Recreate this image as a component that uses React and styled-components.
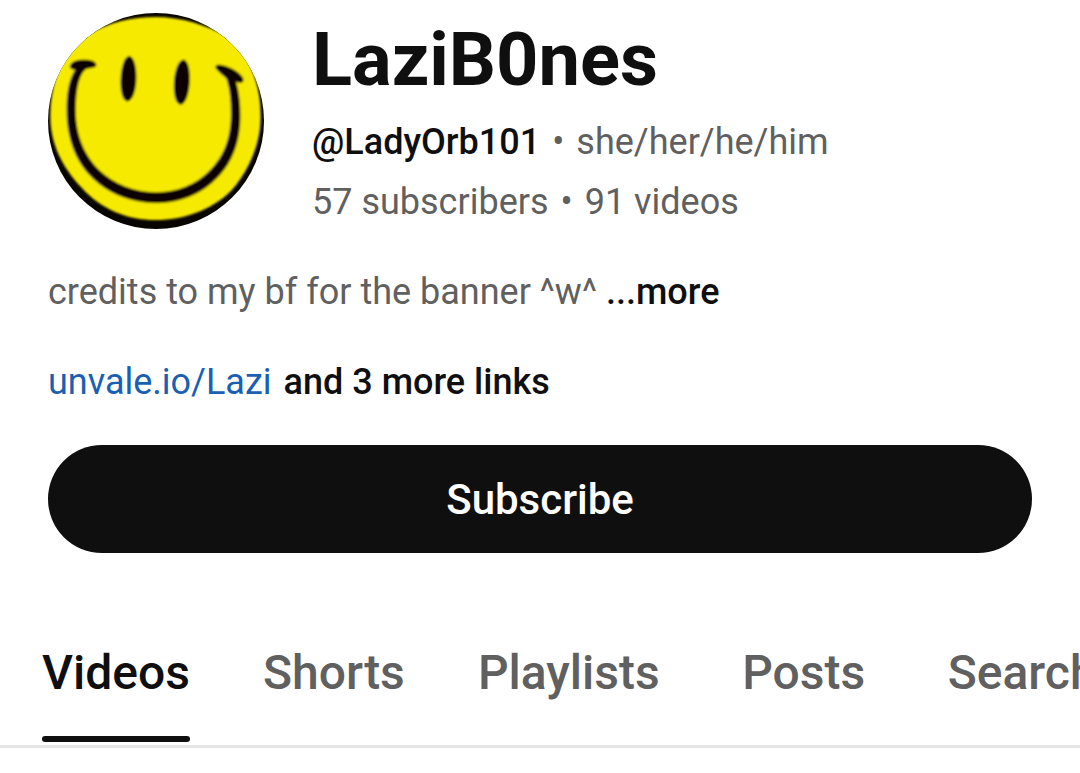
import React from "react";
import styled, { createGlobalStyle } from "styled-components";

const Global = createGlobalStyle`
  * { box-sizing: border-box; }
  body { margin: 0; background: #fff; color: #0f0f0f; font-family: Roboto, sans-serif; overflow-x: hidden; }
  h1, p { margin: 0; }
  button { font-family: inherit; border: 0; padding: 0; background: none; color: inherit; cursor: pointer; }
`;
const Page = styled.main`
  overflow: hidden;
`;
const Header = styled.header`
  display: flex;
  gap: 48px;
  padding: 13px 48px 0;
`;
const Avatar = styled.svg`
  flex: none;
  width: 216px;
  height: 216px;
  border-radius: 50%;
`;
const Info = styled.div`
  min-width: 0;
  white-space: nowrap;
`;
const Name = styled.h1`
  margin-top: 5px;
  font-size: 74px;
  line-height: 84px;
  font-weight: 700;
`;
const Meta = styled.p`
  display: flex;
  gap: 12px;
  margin-top: ${(p) => p.$top}px;
  font-size: 36px;
  line-height: 48px;
  color: #606060;
`;
const Handle = styled.span`
  font-weight: 500;
  color: #0f0f0f;
`;
const About = styled.section`
  display: flex;
  flex-direction: column;
  gap: 42px;
  padding: 39px 48px;
`;
const Line = styled.p`
  display: flex;
  gap: ${(p) => p.$gap}px;
  font-size: 36px;
  line-height: 48px;
  color: #606060;
`;
const TextButton = styled.button`
  font-size: 36px;
  line-height: 48px;
  font-weight: 500;
  color: #0f0f0f;
`;
const SiteLink = styled.a`
  color: #1a5fb4;
  text-decoration: none;
`;
const Actions = styled.div`
  padding: 0 48px;
`;
const Subscribe = styled.button`
  width: 100%;
  height: 108px;
  border-radius: 54px;
  && { background: #0f0f0f; color: #fff; }
  font-size: 42px;
  font-weight: 500;
`;
const Tabs = styled.nav`
  display: flex;
  gap: 72px;
  margin-top: 60px;
  padding-left: 42px;
  border-bottom: 3px solid #e5e5e5;
  overflow-x: auto;
  scrollbar-width: none;
`;
const Tab = styled.button`
  flex: none;
  min-width: 144px;
  && { color: ${(p) => (p.$active ? "#0f0f0f" : "#606060")}; }
  font-size: 48px;
  line-height: 120px;
  font-weight: 500;
  && { padding-bottom: 3px; }
  &::after {
    content: "";
    display: block;
    height: 6px;
    margin-top: 3px;
    border-radius: 3px;
    background: ${(p) => (p.$active ? "#0f0f0f" : "transparent")};
  }
`;

function Smiley() {
  return (
    <Avatar viewBox="24 39 648 648" role="img" aria-label="Smiley face">
      <defs>
        <filter id="soft" x="-5%" y="-5%" width="110%" height="110%">
          <feGaussianBlur stdDeviation="3" />
        </filter>
      </defs>
      <rect x="24" y="39" width="648" height="648" fill="#080400" />
      <g filter="url(#soft)">
        <path
          d="M348 51 C420 51 500 74 560 110 C628 158 662 250 662 350 C662 432 627 512 573 573 C512 632 430 660 348 660 C260 660 183 627 125 563 C67 502 31 430 31 350 C31 290 42 240 64 190 L40 180 L110 90 L150 101 C210 66 275 51 348 51 Z"
          fill="#f6ea00"
        />
        <g fill="#080400" stroke="#080400" strokeWidth="2">
          <path d="M268 169 C280 169 289 200 288 236 C287 274 276 303 262 303 C249 303 241 272 243 236 C245 198 255 169 268 169 Z" />
          <path d="M430 180 C443 180 450 210 448 246 C446 284 435 313 422 313 C408 313 401 283 403 246 C405 210 417 180 430 180 Z" />
          <path d="M91 198 C92 187 108 180 132 180 C153 180 168 185 168 195 C168 203 153 202 138 206 C114 224 106 275 106 335 C107 400 127 459 174 508 C222 555 284 578 350 578 C412 577 466 556 509 513 C556 465 574 410 574 340 C574 302 571 268 561 237 C550 225 526 209 527 199 C530 191 554 197 574 206 C597 217 612 233 609 243 C606 251 594 247 587 244 C597 278 600 314 600 348 C600 416 581 482 532 532 C484 583 418 608 350 608 C272 608 202 579 153 529 C100 474 82 403 81 335 C80 282 88 236 108 207 C98 209 90 208 91 198 Z" />
        </g>
      </g>
    </Avatar>
  );
}

export default function App() {
  return (
    <Page>
      <Global />
      <Header>
        <Smiley />
        <Info>
          <Name>LaziB0nes</Name>
          <Meta $top={16}><Handle>@LadyOrb101</Handle><span>•</span><span>she/her/he/him</span></Meta>
          <Meta $top={12}><span>57 subscribers</span><span>•</span><span>91 videos</span></Meta>
        </Info>
      </Header>
      <About>
        <Line $gap={9}><span>credits to my bf for the banner ^w^</span><TextButton>...more</TextButton></Line>
        <Line $gap={12}><SiteLink href="#links">unvale.io/Lazi</SiteLink><TextButton>and 3 more links</TextButton></Line>
      </About>
      <Actions><Subscribe>Subscribe</Subscribe></Actions>
      <Tabs>
        {["Videos", "Shorts", "Playlists", "Posts", "Search"].map((t, i) => (
          <Tab key={t} $active={i === 0}>{t}</Tab>
        ))}
      </Tabs>
    </Page>
  );
}
